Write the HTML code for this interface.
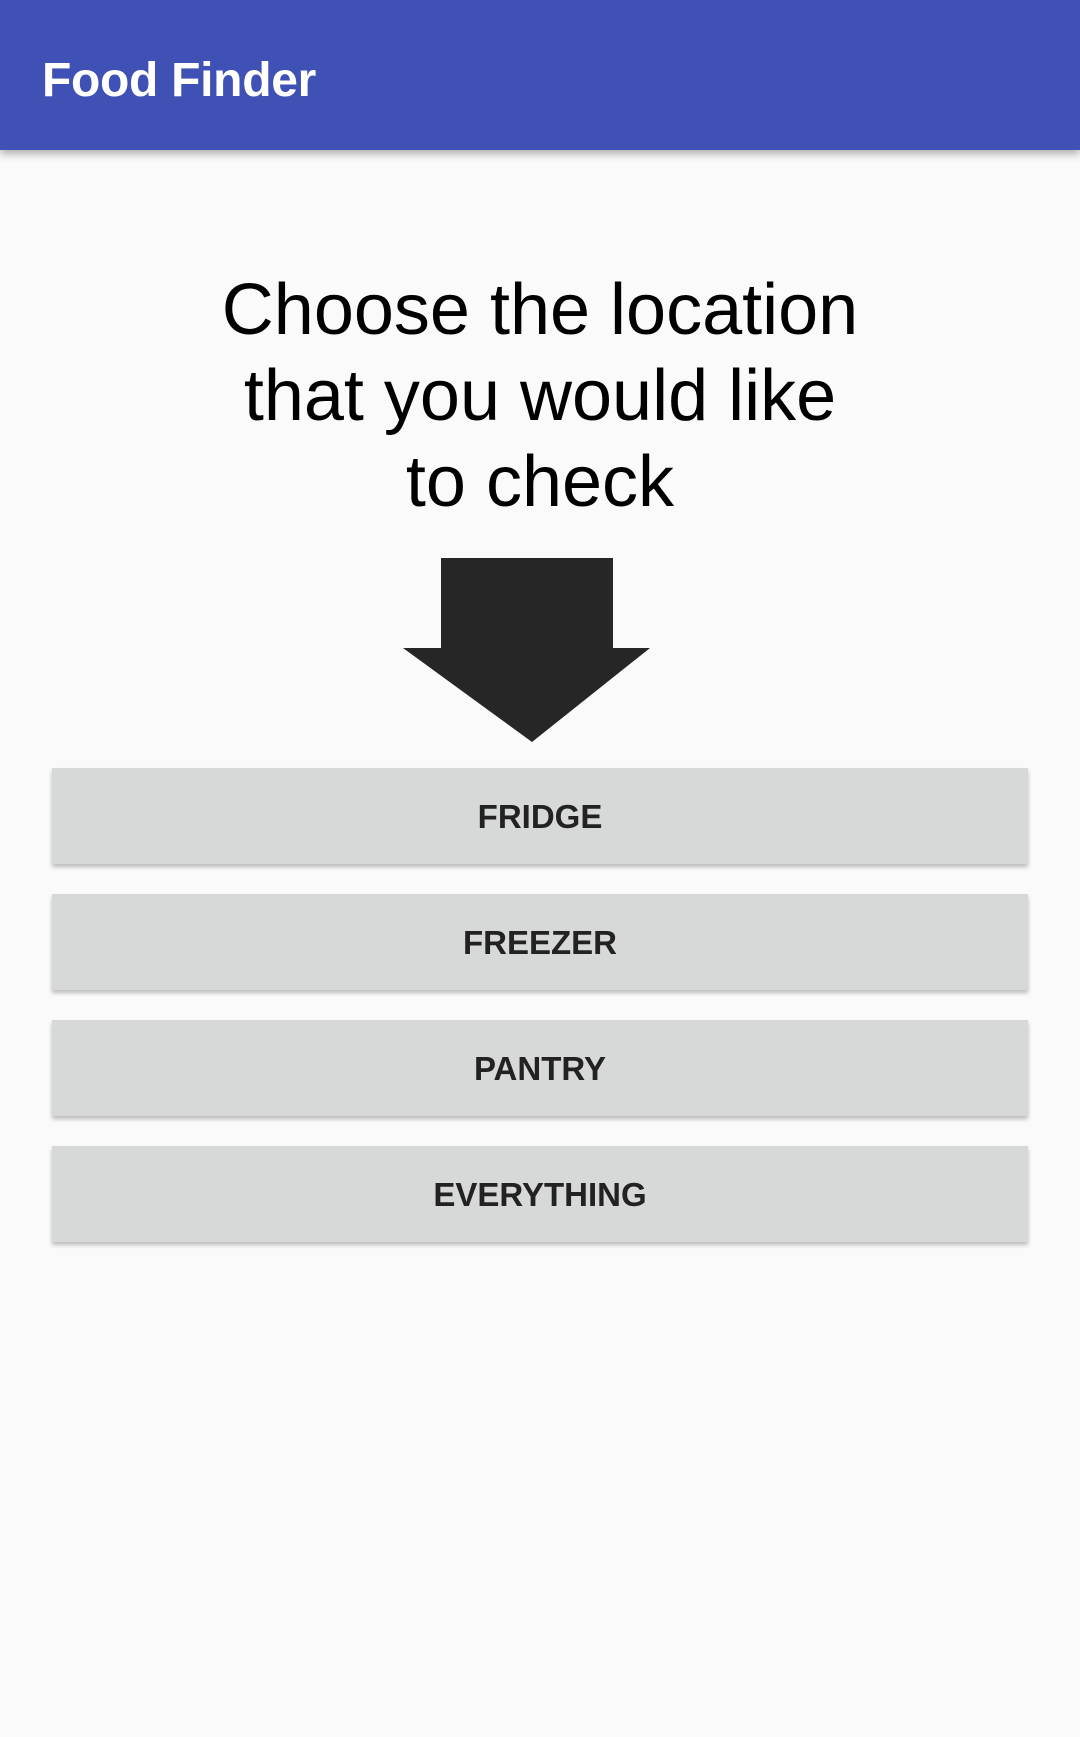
<!DOCTYPE html>
<html><head><meta charset="utf-8"><style>
html,body{margin:0;padding:0;width:1080px;height:1737px;background:#fafafa;overflow:hidden;font-family:"Liberation Sans",sans-serif;}
.bar{position:absolute;left:0;top:0;width:1080px;height:150px;background:#3f51b5;box-shadow:0 4px 8px rgba(0,0,0,0.3);}
.bar span{position:absolute;left:42px;top:51px;color:#fff;font-size:48px;font-weight:bold;line-height:60px;letter-spacing:-0.3px}
.h{position:absolute;left:0;width:1080px;top:267px;text-align:center;font-size:72px;line-height:86px;color:#000}
.btn{position:absolute;left:52px;width:976px;height:96px;background:#d7d8d8;box-shadow:0 3px 4px rgba(0,0,0,0.25);text-align:center;line-height:98px;font-size:33px;font-weight:bold;color:#222}
</style></head><body>
<div class="bar"><span>Food Finder</span></div>
<div class="h">Choose the location<br>that you would like<br>to check</div>
<svg style="position:absolute;left:0;top:0" width="1080" height="800"><polygon points="441,558 613,558 613,648 650,648 532,742 403,648 441,648" fill="#262626"/></svg>
<div class="btn" style="top:768px">FRIDGE</div>
<div class="btn" style="top:894px">FREEZER</div>
<div class="btn" style="top:1020px">PANTRY</div>
<div class="btn" style="top:1146px">EVERYTHING</div>
</body></html>
